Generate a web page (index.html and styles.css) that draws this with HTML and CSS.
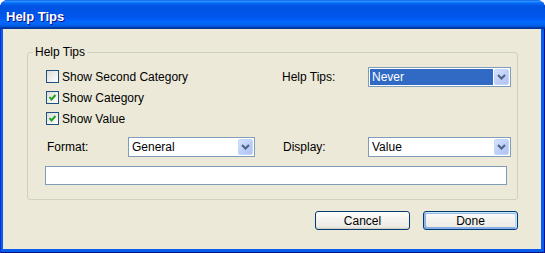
FILE: index.html
```html
<!DOCTYPE html>
<html>
<head>
<meta charset="utf-8">
<link rel="stylesheet" href="styles.css">
</head>
<body>
<div class="window">
  <div class="titlebar"><span class="title">Help Tips</span></div>
  <div class="client">
    <fieldset class="group">
      <legend class="legend">Help Tips</legend>
      <div class="group-body">
        <label class="check row1"><span class="box"></span><span>Show Second Category</span></label>
        <span class="label lbl-tips">Help Tips:</span>
        <div class="select sel-tips"><span class="value selected">Never</span><span class="arrow"><svg width="9" height="6" viewBox="0 0 9 6"><polyline points="1,1 4.5,4.5 8,1" fill="none" stroke="#4D6185" stroke-width="2"/></svg></span></div>
        <label class="check row2"><span class="box checked"><svg width="11" height="11" viewBox="0 0 11 11"><polyline points="2.5,5 4.5,7.5 8.5,3" fill="none" stroke="#21A121" stroke-width="2"/></svg></span><span>Show Category</span></label>
        <label class="check row3"><span class="box checked"><svg width="11" height="11" viewBox="0 0 11 11"><polyline points="2.5,5 4.5,7.5 8.5,3" fill="none" stroke="#21A121" stroke-width="2"/></svg></span><span>Show Value</span></label>
        <span class="label lbl-format">Format:</span>
        <div class="select sel-format"><span class="value">General</span><span class="arrow"><svg width="9" height="6" viewBox="0 0 9 6"><polyline points="1,1 4.5,4.5 8,1" fill="none" stroke="#4D6185" stroke-width="2"/></svg></span></div>
        <span class="label lbl-display">Display:</span>
        <div class="select sel-display"><span class="value">Value</span><span class="arrow"><svg width="9" height="6" viewBox="0 0 9 6"><polyline points="1,1 4.5,4.5 8,1" fill="none" stroke="#4D6185" stroke-width="2"/></svg></span></div>
        <div class="textbox"></div>
      </div>
    </fieldset>
    <div class="buttons">
      <button class="btn">Cancel</button>
      <button class="btn default">Done</button>
    </div>
  </div>
</div>
</body>
</html>
```
FILE: styles.css
```css
html, body {
  margin: 0;
  padding: 0;
  background: #ffffff;
}
body {
  font-family: "Liberation Sans", Arial, sans-serif;
  font-size: 12px;
  color: #000;
}
.window {
  width: 545px;
  height: 253px;
  box-sizing: border-box;
  display: flex;
  flex-direction: column;
  background: #0A5CEA;
  border-radius: 8px 8px 0 0;
  overflow: hidden;
  box-shadow: inset 1px 0 #0831D9, inset -1px -1px #00138C;
}
.titlebar {
  height: 29px;
  box-sizing: border-box;
  padding: 4px 0 0 6px;
  line-height: 25px;
  background: linear-gradient(to bottom, #0058EE 0%, #3593FF 4%, #288EFF 6%, #127DFF 8%, #036FFC 10%, #0262EE 14%, #0057E5 20%, #0054E3 24%, #0055EB 56%, #005BF5 66%, #026AFE 76%, #0062EF 86%, #0052D6 92%, #0040AB 94%, #003092 100%);
  border-radius: 8px 8px 0 0;
}
.title {
  font-family: "Liberation Sans", Arial, sans-serif;
  font-weight: bold;
  font-size: 13px;
  color: #fff;
  text-shadow: 1px 1px #0F1089;
}
.client {
  flex: 1;
  margin: 0 4px 4px 3px;
  background: #ECE9D8;
  padding: 0 23px 0 24px;
}
.group {
  margin: 16px 0 0 0;
  padding: 0;
  border: 1px solid #D0D0BF;
  border-radius: 3px;
  min-width: 0;
}
.legend {
  margin-left: 5px;
  padding: 0 2px;
  line-height: 14px;
}
.group-body {
  display: grid;
  grid-template-columns: 83px 127px 27px 86px 143px;
  grid-template-rows: 21px 21px 21px 27px 28px;
  padding: 8px 6px 14px 17px;
}
.check {
  grid-column: 1 / 4;
  display: flex;
  align-items: flex-start;
  gap: 3px;
  padding-top: 3px;
  line-height: 13px;
}
.row1 { grid-row: 1; }
.row2 { grid-row: 2; }
.row3 { grid-row: 3; }
.check span:last-child { margin-top: 1px; }
.box {
  width: 13px;
  height: 13px;
  box-sizing: border-box;
  margin-left: 1px;
  border: 1px solid #1C5180;
  background: linear-gradient(135deg, #DCDCD7 0%, #FFFFFF 100%);
  display: flex;
  align-items: center;
  justify-content: center;
}
.box svg { display: block; }
.label {
  align-self: center;
}
.lbl-tips { grid-row: 1; grid-column: 4; align-self: start; line-height: 20px; }
.lbl-format { grid-row: 4; grid-column: 1; align-self: end; line-height: 20px; padding-left: 2px; }
.lbl-display { grid-row: 4; grid-column: 4; align-self: end; line-height: 20px; padding-left: 1px; }
.select {
  height: 20px;
  box-sizing: border-box;
  border: 1px solid #7F9DB9;
  background: #fff;
  display: flex;
  align-items: stretch;
  padding: 1px;
}
.sel-tips { grid-row: 1; grid-column: 5; align-self: start; }
.sel-format { grid-row: 4; grid-column: 2; align-self: end; }
.sel-display { grid-row: 4; grid-column: 5; align-self: end; }
.value {
  flex: 1;
  padding-left: 2px;
  line-height: 16px;
}
.value.selected {
  background: #316AC5;
  color: #fff;
  margin-right: 1px;
}
.arrow {
  width: 15px;
  box-sizing: border-box;
  border: 1px solid #C5D5FA;
  border-radius: 2px;
  background: linear-gradient(135deg, #D6E2FD 0%, #BBCDF7 60%, #B0C4F4 100%);
  display: flex;
  align-items: center;
  justify-content: center;
}
.arrow svg { display: block; }
.textbox {
  grid-row: 5;
  grid-column: 1 / 6;
  align-self: end;
  width: 462px;
  height: 19px;
  box-sizing: border-box;
  border: 1px solid #7F9DB9;
  background: #fff;
}
.buttons {
  display: flex;
  justify-content: flex-end;
  gap: 13px;
  margin-top: 11px;
}
.btn {
  width: 95px;
  height: 19px;
  box-sizing: border-box;
  padding: 0;
  font-family: "Liberation Sans", Arial, sans-serif;
  font-size: 12px;
  color: #000;
  border: 1px solid #003C74;
  border-radius: 3px;
  background: linear-gradient(180deg, #FFFFFF 0%, #F4F3EE 40%, #ECEBE6 86%, #D6D0C5 100%);
  box-shadow: inset 0 -1px #D6D0C5;
}
.btn.default {
  box-shadow: inset -1px 1px #CEE7FF, inset 1px 2px #98B8EA, inset -2px 2px #BCD4F6, inset 1px -1px #89ADE4, inset 2px -2px #89ADE4;
}
```
